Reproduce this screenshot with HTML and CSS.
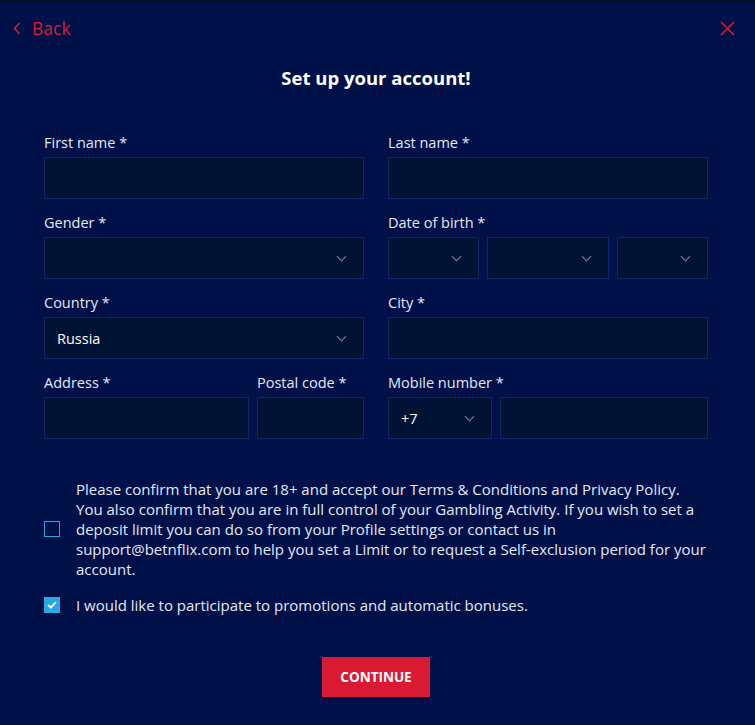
FILE: index.html
```html
<!DOCTYPE html>
<html>

<head>
    <meta charset="UTF-8">
    <meta name="viewport" content="width=device-width, initial-scale=1.0">
    <title>Set up your account</title>
    <link rel="stylesheet" href="styles.css">
</head>

<body>
    <div class="top-strip"></div>
    <div class="modal">
        <div class="modal-header">
            <a class="back-link" href="#">
                <svg width="8" height="13" viewBox="0 0 8 13"><path d="M6.5 1 L1.5 6.5 L6.5 12" fill="none" stroke="#d91a32" stroke-width="1.6"/></svg>
                <span>Back</span>
            </a>
            <a class="close-btn" href="#">
                <svg width="15" height="15" viewBox="0 0 15 15"><path d="M1 1 L14 14 M14 1 L1 14" fill="none" stroke="#d91a32" stroke-width="1.6"/></svg>
            </a>
        </div>

        <h1>Set up your account!</h1>

        <form class="account-form">
            <div class="form-grid">
                <div class="field">
                    <label>First name *</label>
                    <div class="input"></div>
                </div>
                <div class="field">
                    <label>Last name *</label>
                    <div class="input"></div>
                </div>

                <div class="field">
                    <label>Gender *</label>
                    <div class="input select"><span></span><i class="chevron"></i></div>
                </div>
                <div class="field">
                    <label>Date of birth *</label>
                    <div class="dob-row">
                        <div class="input select"><span></span><i class="chevron"></i></div>
                        <div class="input select"><span></span><i class="chevron"></i></div>
                        <div class="input select"><span></span><i class="chevron"></i></div>
                    </div>
                </div>

                <div class="field">
                    <label>Country *</label>
                    <div class="input select"><span>Russia</span><i class="chevron"></i></div>
                </div>
                <div class="field">
                    <label>City *</label>
                    <div class="input"></div>
                </div>

                <div class="split-row address-row">
                    <div class="field">
                        <label>Address *</label>
                        <div class="input"></div>
                    </div>
                    <div class="field">
                        <label>Postal code *</label>
                        <div class="input"></div>
                    </div>
                </div>
                <div class="field">
                    <label>Mobile number *</label>
                    <div class="split-row phone-row">
                        <div class="input select"><span>+7</span><i class="chevron"></i></div>
                        <div class="input"></div>
                    </div>
                </div>
            </div>

            <div class="checks">
                <label class="check-row">
                    <span class="checkbox"></span>
                    <span class="check-text">Please confirm that you are 18+ and accept our Terms &amp; Conditions and Privacy Policy. You also confirm that you are in full control of your Gambling Activity. If you wish to set a deposit limit you can do so from your Profile settings or contact us in support@betnflix.com to help you set a Limit or to request a Self-exclusion period for your account.</span>
                </label>
                <label class="check-row">
                    <span class="checkbox checked">
                        <svg width="10" height="8" viewBox="0 0 10 8"><path d="M1 4 L3.8 6.6 L9 1.2" fill="none" stroke="#fff" stroke-width="1.8"/></svg>
                    </span>
                    <span class="check-text">I would like to participate to promotions and automatic bonuses.</span>
                </label>
            </div>

            <div class="actions">
                <button type="button" class="continue-btn">CONTINUE</button>
            </div>
        </form>
    </div>
</body>

</html>
```

FILE: styles.css
```css
/* Reset styles */
* {
    margin: 0;
    padding: 0;
    box-sizing: border-box;
}

body {
    font-family: "Open Sans", "Noto Sans", sans-serif;
    background-color: #00114a;
    color: #e3e7f3;
    width: 755px;
    height: 725px;
    overflow: hidden;
}

.top-strip {
    height: 2px;
    background-color: #06101f;
}

.modal {
    padding: 0 47px 0 44px;
}

/* Header */
.modal-header {
    display: flex;
    justify-content: space-between;
    align-items: center;
    height: 52px;
    margin: 0 -27px 0 -31px;
}

.back-link {
    display: flex;
    align-items: center;
    gap: 11px;
    color: #d91a32;
    text-decoration: none;
    font-size: 17.5px;
}

.close-btn {
    display: flex;
}

h1 {
    text-align: center;
    font-size: 18.5px;
    font-weight: 700;
    color: #fff;
    margin-top: 11px;
    height: 48px;
}

/* Form */
.form-grid {
    display: grid;
    grid-template-columns: 320px 320px;
    column-gap: 24px;
    row-gap: 14px;
    margin-top: 20px;
}

.field label {
    display: block;
    font-size: 14.5px;
    line-height: 20px;
    height: 20px;
    margin-bottom: 4px;
    color: #e3e7f3;
}

.input {
    height: 42px;
    background-color: #001233;
    border: 1px solid #0a2766;
    display: flex;
    align-items: center;
    padding: 0 12px;
    font-size: 14.5px;
    color: #fff;
}

.select {
    justify-content: space-between;
}

.chevron {
    width: 7px;
    height: 7px;
    border-right: 1.5px solid #7d86a3;
    border-bottom: 1.5px solid #7d86a3;
    transform: rotate(45deg);
    margin: -4px 6px 0 0;
}

.dob-row {
    display: grid;
    grid-template-columns: 91px 122px 91px;
    column-gap: 8px;
}

.split-row {
    display: grid;
    column-gap: 8px;
}

.address-row {
    grid-template-columns: 205px 107px;
}

.phone-row {
    grid-template-columns: 104px 208px;
}

/* Checkboxes */
.checks {
    margin-top: 40px;
    display: flex;
    flex-direction: column;
    gap: 16px;
}

.check-row {
    display: flex;
    align-items: center;
    gap: 16px;
}

.checkbox {
    flex: 0 0 16px;
    width: 16px;
    height: 16px;
    border: 1.5px solid #27a9e6;
    display: flex;
    align-items: center;
    justify-content: center;
}

.checkbox.checked {
    background-color: #27a9e6;
}

.check-text {
    max-width: 632px;
    font-size: 15px;
    line-height: 20px;
    color: #e3e7f3;
}

.actions {
    display: flex;
    justify-content: center;
    margin-top: 42px;
}

.continue-btn {
    width: 108px;
    height: 40px;
    background-color: #d91a32;
    color: #fff;
    border: none;
    font-family: inherit;
    font-size: 13.5px;
    font-weight: 700;
    cursor: pointer;
}
```
